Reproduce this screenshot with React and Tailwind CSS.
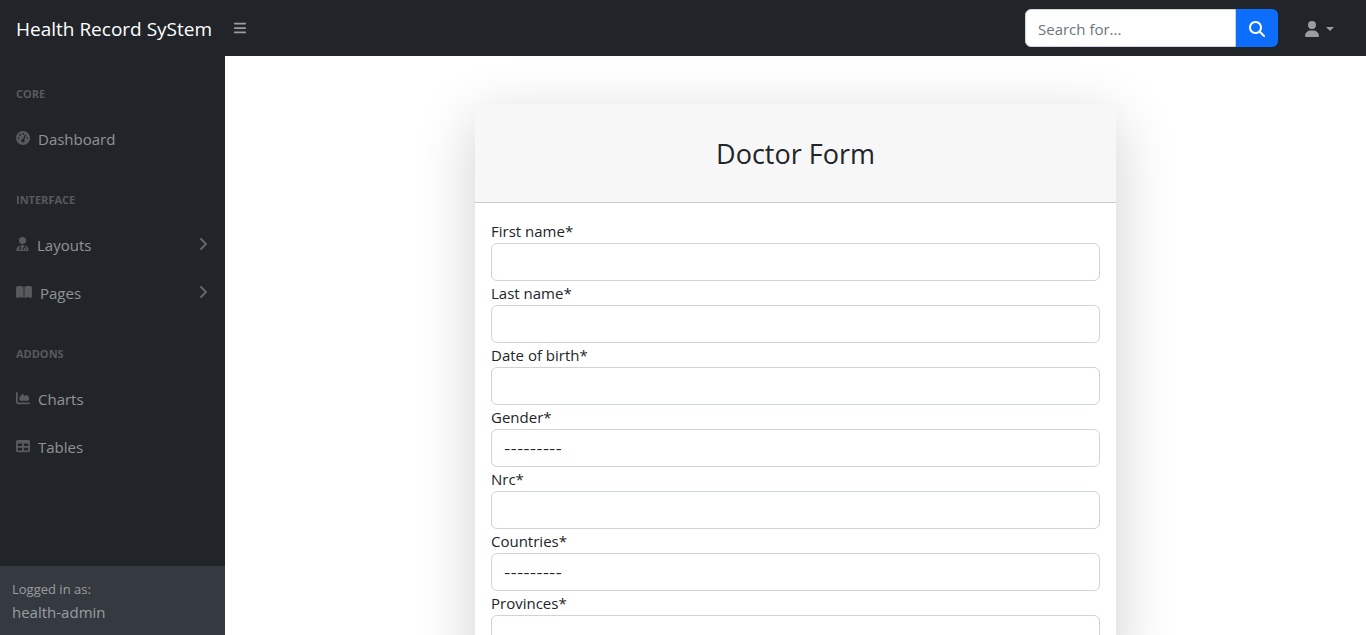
import { useId } from "react";
import {
  FaAngleRight,
  FaBars,
  FaBookOpen,
  FaChartArea,
  FaGaugeHigh,
  FaMagnifyingGlass,
  FaTable,
  FaUser,
  FaUserDoctor,
} from "react-icons/fa6";

const sections = [
  {
    title: "Core",
    links: [{ label: "Dashboard", icon: FaGaugeHigh, size: "w-3.5" }],
  },
  {
    title: "Interface",
    links: [
      { label: "Layouts", icon: FaUserDoctor, size: "w-[13px]", expandable: true },
      { label: "Pages", icon: FaBookOpen, size: "w-4", expandable: true },
    ],
  },
  {
    title: "Addons",
    links: [
      { label: "Charts", icon: FaChartArea, size: "w-3.5" },
      { label: "Tables", icon: FaTable, size: "w-3.5" },
    ],
  },
];

const fields = [
  { label: "First name*" },
  { label: "Last name*" },
  { label: "Date of birth*" },
  { label: "Gender*", select: true },
  { label: "Nrc*" },
  { label: "Countries*", select: true },
  { label: "Provinces*" },
];

function TopBar() {
  return (
    <header className="flex h-14 shrink-0 items-center bg-[#212529]">
      <a href="#" className="w-[225px] pt-0.5 pl-4 text-[19px] whitespace-nowrap text-white">
        Health Record SyStem
      </a>
      <button type="button" aria-label="Toggle sidebar" className="px-2 text-sm text-white/55">
        <FaBars />
      </button>
      <form className="ml-auto flex h-[38px]" onSubmit={(e) => e.preventDefault()}>
        <input
          type="text"
          aria-label="Search for..."
          placeholder="Search for..."
          className="w-[211px] rounded-l-md border border-[#ced4da] bg-white px-3 pt-0.5 text-[#212529] placeholder:text-[#6c757d]"
        />
        <button
          type="submit"
          aria-label="Search"
          className="rounded-r-md bg-[#0d6efd] px-[13px] pt-0.5 text-base text-white"
        >
          <FaMagnifyingGlass />
        </button>
      </form>
      <button
        type="button"
        aria-label="User menu"
        className="mr-8 ml-[26px] flex items-center gap-1.5 pt-0.5 text-base text-white/55"
      >
        <FaUser className="h-4 w-4" />
        <svg viewBox="0 0 8 4" className="h-1 w-2" fill="currentColor">
          <path d="M0 0h8L4 4z" />
        </svg>
      </button>
    </header>
  );
}

function SideNav() {
  return (
    <aside className="flex w-[225px] shrink-0 flex-col bg-[#212529]">
      <nav className="grow">
        {sections.map((section) => (
          <div key={section.title}>
            <h2 className="px-4 pt-[29px] pb-[11px] text-[11px] leading-[18px] font-bold text-white/25 uppercase">
              {section.title}
            </h2>
            {section.links.map(({ label, icon: Icon, size, expandable }) => (
              <a key={label} href="#" className="flex h-12 items-center px-4 text-white/50">
                <Icon className={`mr-2 h-3.5 text-white/25 ${size}`} />
                <span className="pt-0.5">{label}</span>
                {expandable && <FaAngleRight className="ml-auto h-4 w-3 text-white/30" />}
              </a>
            ))}
          </div>
        ))}
      </nav>
      <div className="bg-[#343a40] px-3 pt-[13px] pb-[11px] text-white/50">
        <div className="text-[13px] leading-[21px]">Logged in as:</div>
        <div>health-admin</div>
      </div>
    </aside>
  );
}

function Field({ label, select }) {
  const id = useId();
  const box =
    "block h-[38px] w-full appearance-none rounded-md border border-[#ced4da] bg-white px-3 text-[#212529]";
  return (
    <div>
      <label htmlFor={id} className="block">
        {label}
      </label>
      {select ? (
        <select id={id} className={`${box} pt-0.5 font-['Inter',sans-serif] text-sm`}>
          <option>---------</option>
        </select>
      ) : (
        <input id={id} type="text" className={box} />
      )}
    </div>
  );
}

export default function App() {
  return (
    <div className="flex h-screen flex-col overflow-hidden bg-white font-['Open_Sans',sans-serif] text-[15px] leading-6 text-[#212529]">
      <TopBar />
      <div className="flex min-h-0 grow">
        <SideNav />
        <main className="grow overflow-y-auto px-3 py-12 [scrollbar-width:none]">
          <section className="mx-auto max-w-[641px] bg-white shadow-[0_16px_56px_rgba(0,0,0,0.19)]">
            <h1 className="border-b border-[#c8c9ca] bg-[#f7f7f7] pt-[33px] pb-[31px] text-center text-[27px] leading-[34px]">
              Doctor Form
            </h1>
            <form className="p-4">
              {fields.map((field) => (
                <Field key={field.label} {...field} />
              ))}
            </form>
          </section>
        </main>
      </div>
    </div>
  );
}
